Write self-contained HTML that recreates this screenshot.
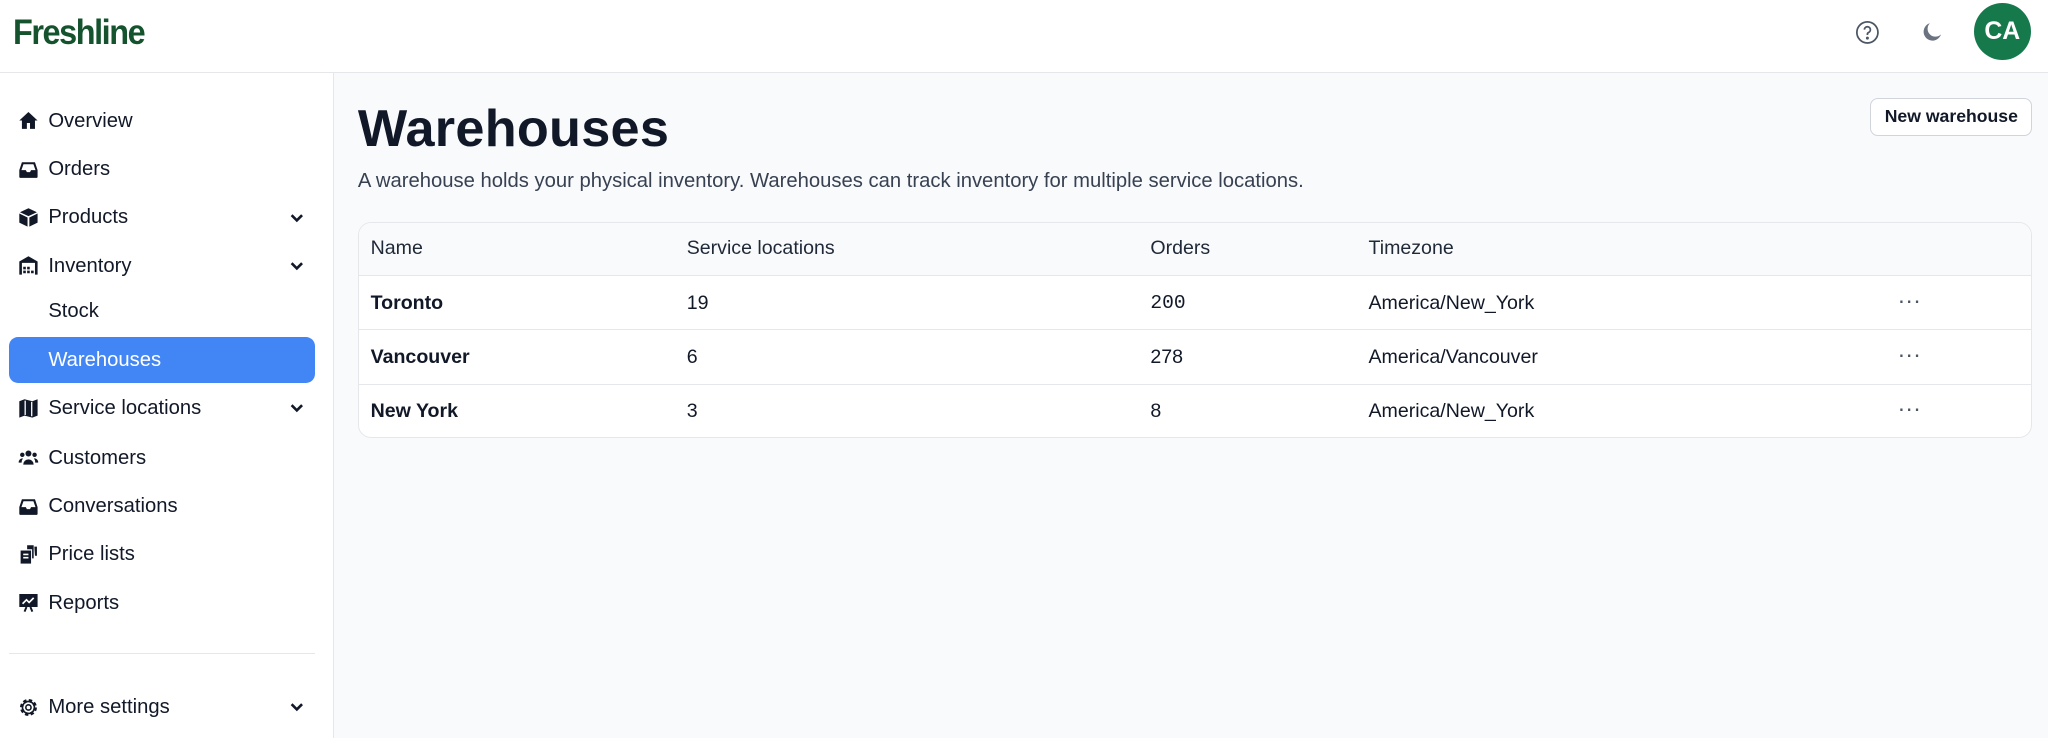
<!DOCTYPE html>
<html><head><meta charset="utf-8"><style>
*{box-sizing:border-box;margin:0;padding:0}
html,body{width:2048px;height:738px;overflow:hidden;background:#fff}
#w{zoom:1.30612;width:1568px;height:565px;position:relative;font-family:"Liberation Sans",sans-serif;color:#111827}
.hdr{position:absolute;left:0;top:0;width:1568px;height:56px;border-bottom:1px solid #e5e7eb;background:#fff}
.logo{position:absolute;left:10px;top:10px;font-size:27px;font-weight:bold;color:#14532d;letter-spacing:-1.2px;transform:scaleX(.92);transform-origin:left}
.side{position:absolute;left:0;top:56px;width:256px;height:509px;border-right:1px solid #e5e7eb;background:#fff}
.main{position:absolute;left:256px;top:56px;right:0;height:509px;background:#f8fafc}
.nav{position:absolute;left:7px;width:234px;height:35px;display:flex;align-items:center;font-size:15.5px;color:#111827}
.nav svg.i{position:absolute;left:7px;width:16px;height:16px}
.nav span{position:absolute;left:30px;top:9px}
.nav .ch{position:absolute;left:214px;width:12px;height:12px}
.act{background:#4285f4;border-radius:7px;color:#fff}
h1{position:absolute;left:18px;top:20px;font-size:40px;font-weight:bold;letter-spacing:.2px}
.sub{position:absolute;left:18px;top:74px;font-size:15.5px;color:#374151}
.btn{position:absolute;left:1176px;top:19px;width:124px;height:29px;background:#fff;border:1px solid #d1d5db;border-radius:6px;font-size:13.5px;font-weight:bold;display:flex;align-items:center;justify-content:center;color:#111827}
.tbl{position:absolute;left:18px;top:114px;width:1282px;height:165px;border:1px solid #e5e7eb;border-radius:10px;background:#fff;overflow:hidden}
.row{position:absolute;left:0;width:100%;height:41.5px;border-top:1px solid #e5e7eb;font-size:15px}
.row div{position:absolute;top:12px}
.row .d{left:1178px;top:8px;font-size:18px;color:#4b5563}
.th{background:#f9fafb;border-top:none;color:#1f2937;height:40px}
.th div{top:11px}
</style></head><body><div id="w">
<div class="hdr">
<div class="logo">Freshline</div>
<svg style="position:absolute;left:1420px;top:15px" width="19" height="19" viewBox="0 0 20 20" fill="none" stroke="#4b5563" stroke-width="1.4"><circle cx="10" cy="10" r="8.5"/><path d="M7.6 7.8a2.4 2.4 0 1 1 3.4 2.2c-.7.3-1 .8-1 1.5v.6"/><circle cx="10" cy="14.6" r=".5" fill="#4b5563"/></svg>
<svg style="position:absolute;left:1471px;top:16px" width="17" height="17" viewBox="0 0 20 20"><path d="M8 2a8 8 0 1 0 10 10A7 7 0 0 1 8 2z" fill="#6b7280"/></svg>
<div style="position:absolute;left:1511px;top:2px;width:44px;height:44px;border-radius:50%;background:#16794c;color:#fff;font-weight:bold;font-size:19px;line-height:44px;text-align:center">CA</div>
</div>
<div class="side">
<div class="nav" style="top:19px"><svg class="i" viewBox="0 0 16 16"><path d="M8 1.5 1 8h2v6.5h3.8V10h2.4v4.5H13V8h2z" fill="#111827"/></svg><span>Overview</span></div>
<div class="nav" style="top:56px"><svg class="i" viewBox="0 0 16 16"><path d="M3 2.5h10l2 6v5a1 1 0 0 1-1 1H2a1 1 0 0 1-1-1v-5zM2.6 8.5h3.4l.8 1.6h2.4l.8-1.6h3.4L11.8 4H4.2z" fill="#111827" fill-rule="evenodd"/></svg><span>Orders</span></div>
<div class="nav" style="top:93px"><svg class="i" viewBox="0 0 16 16"><path d="M8 1l6.5 3L8 7 1.5 4zM1 5l6.3 3v7L1 12zM15 5 8.7 8v7l6.3-3z" fill="#111827"/></svg><span>Products</span><svg class="ch" viewBox="0 0 12 12"><path d="M2 4l4 4 4-4" stroke="#111827" stroke-width="2" fill="none"/></svg></div>
<div class="nav" style="top:130px"><svg class="i" viewBox="0 0 16 16"><path d="M1 5 8 1l7 4v10h-2V6H3v9H1z M4 9h2v2H4zM7 9h2v2H7zM4 12h2v2H4zM7 12h2v2H7zM10 12h2v2h-2z" fill="#111827"/></svg><span>Inventory</span><svg class="ch" viewBox="0 0 12 12"><path d="M2 4l4 4 4-4" stroke="#111827" stroke-width="2" fill="none"/></svg></div>
<div class="nav" style="top:165px"><span>Stock</span></div>
<div class="nav act" style="top:202px;color:#fff"><span>Warehouses</span></div>
<div class="nav" style="top:239px"><svg class="i" viewBox="0 0 16 16"><path d="M1 2.5l4-1.5 6 1.5 4-1.5v12.5l-4 1.5-6-1.5-4 1.5z" fill="#111827"/><path d="M5.5 2v11M10.5 3v11" stroke="#fff" stroke-width="1"/></svg><span>Service locations</span><svg class="ch" viewBox="0 0 12 12"><path d="M2 4l4 4 4-4" stroke="#111827" stroke-width="2" fill="none"/></svg></div>
<div class="nav" style="top:277px"><svg class="i" viewBox="0 0 16 16" fill="#111827"><circle cx="8" cy="5" r="2.3"/><circle cx="3.3" cy="6" r="1.7"/><circle cx="12.7" cy="6" r="1.7"/><path d="M4 13.5a4 4 0 0 1 8 0zM0.5 12a3 3 0 0 1 3.3-3.3 5 5 0 0 0-1 3.3zM15.5 12a3 3 0 0 0-3.3-3.3 5 5 0 0 1 1 3.3z"/></svg><span>Customers</span></div>
<div class="nav" style="top:314px"><svg class="i" viewBox="0 0 16 16"><path d="M3 2.5h10l2 6v5a1 1 0 0 1-1 1H2a1 1 0 0 1-1-1v-5zM2.6 8.5h3.4l.8 1.6h2.4l.8-1.6h3.4L11.8 4H4.2z" fill="#111827" fill-rule="evenodd"/></svg><span>Conversations</span></div>
<div class="nav" style="top:351px"><svg class="i" viewBox="0 0 16 16"><path d="M2 5h8v10H2z" fill="#111827"/><path d="M4 8h4M4 10.5h4" stroke="#fff" stroke-width="1.2"/><path d="M7 1h5v10h-1.2V4H7z M12.5 2h2v7h-1.5z" fill="#111827"/></svg><span>Price lists</span></div>
<div class="nav" style="top:388px"><svg class="i" viewBox="0 0 16 16"><path d="M1 1.5h14v10H1z" fill="#111827"/><path d="M3.5 9l3-3 2 2 3.5-3.5" stroke="#fff" stroke-width="1.3" fill="none"/><path d="M5 15l1.5-3.5M11 15l-1.5-3.5" stroke="#111827" stroke-width="1.5"/></svg><span>Reports</span></div>
<div style="position:absolute;left:7px;top:444px;width:234px;height:1px;background:#e5e7eb"></div>
<div class="nav" style="top:468px"><svg class="i" viewBox="0 0 16 16" fill="none" stroke="#111827" stroke-width="1.2"><circle cx="8" cy="8" r="5.2" stroke-dasharray="2.4 1.7" stroke-width="2.6"/><circle cx="8" cy="8" r="4.6"/><circle cx="8" cy="8" r="2"/></svg><span>More settings</span><svg class="ch" viewBox="0 0 12 12"><path d="M2 4l4 4 4-4" stroke="#111827" stroke-width="2" fill="none"/></svg></div>
</div>
<div class="main">
<h1>Warehouses</h1>
<div class="sub">A warehouse holds your physical inventory. Warehouses can track inventory for multiple service locations.</div>
<div class="btn">New warehouse</div>
<div class="tbl">
<div class="row th" style="top:0"><div style="left:9px">Name</div><div style="left:251px">Service locations</div><div style="left:606px">Orders</div><div style="left:773px">Timezone</div></div>
<div class="row" style="top:40px"><div style="left:9px;font-weight:bold">Toronto</div><div style="left:251px">19</div><div style="left:606px;font-family:'Liberation Mono',monospace">200</div><div style="left:773px">America/New_York</div><div class="d">···</div></div>
<div class="row" style="top:81.5px"><div style="left:9px;font-weight:bold">Vancouver</div><div style="left:251px">6</div><div style="left:606px">278</div><div style="left:773px">America/Vancouver</div><div class="d">···</div></div>
<div class="row" style="top:123px"><div style="left:9px;font-weight:bold">New York</div><div style="left:251px">3</div><div style="left:606px">8</div><div style="left:773px">America/New_York</div><div class="d">···</div></div>
</div>
</div>
</div></body></html>
